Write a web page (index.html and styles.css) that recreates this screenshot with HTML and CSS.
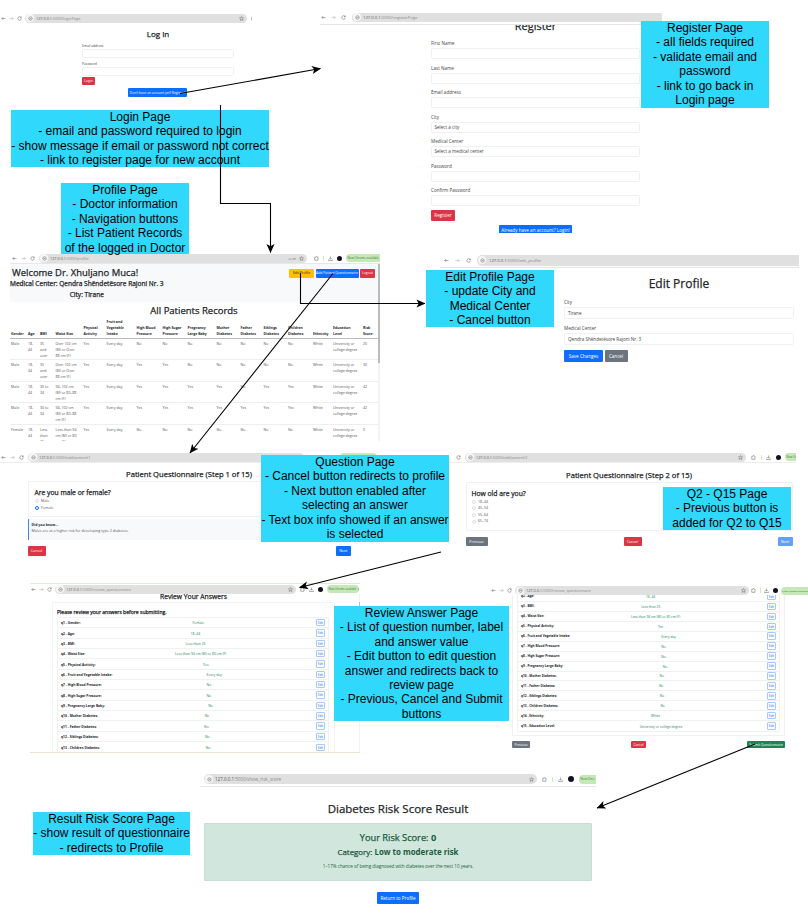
FILE: index.html
```html
<!DOCTYPE html>
<html lang="en">
<head>
<meta charset="utf-8">
<title>Diabetes Risk App – Page Flow</title>
<link rel="stylesheet" href="styles.css">
</head>
<body>
<svg class="defs" aria-hidden="true">
  <symbol id="back" viewBox="0 0 10 10"><path d="M9 5H1.5M4.5 2L1.5 5l3 3" /></symbol>
  <symbol id="fwd" viewBox="0 0 10 10"><path d="M1 5h7.5M5.500 2l3 3-3 3" /></symbol>
  <symbol id="reload" viewBox="0 0 10 10"><path d="M8.500 5.500a3.500 3.500 0 1 1-1-3l1 1M8.500 1v2.500H6" /></symbol>
  <symbol id="info" viewBox="0 0 10 10"><circle cx="5" cy="5" r="3.500"/><path d="M3 5h4" /></symbol>
  <symbol id="star" viewBox="0 0 10 10"><path d="M5 1l1.200 2.700 2.800.3-2.100 2 .6 2.900L5 7.400 2.500 8.900l.6-2.900L1 4l2.800-.3z" /></symbol>
  <symbol id="ext" viewBox="0 0 10 10"><path d="M1.500 2.500h2.500q0-1.500 1.200-1.500t1.200 1.500H8v6H1.500z" /></symbol>
  <symbol id="down" viewBox="0 0 10 10"><path d="M5 1v5M2.500 4L5 6.500 7.500 4M1 7v2h8V7" /></symbol>
</svg>
<main class="canvas">

  <section class="screen login">
    <div class="bar">
      <svg class="ic"><use href="#back"/></svg><svg class="ic dim"><use href="#fwd"/></svg><svg class="ic"><use href="#reload"/></svg>
      <div class="pill"><span class="site"><svg class="ic"><use href="#info"/></svg></span><span class="url"><b>127.0.0.1</b>:5000/loginPage</span><svg class="ic"><use href="#star"/></svg></div>
      <svg class="ic tail"><use href="#ext"/></svg>
    </div>
    <div class="form">
      <h2>Log In</h2>
      <label>Email address</label><div class="input"></div>
      <label>Password</label><div class="input"></div>
      <span class="btn red">Login</span>
      <span class="btn blue wide">Don't have an account yet? Register!</span>
    </div>
  </section>

  <section class="screen register">
    <div class="bar">
      <svg class="ic"><use href="#back"/></svg><svg class="ic dim"><use href="#fwd"/></svg><svg class="ic"><use href="#reload"/></svg>
      <div class="pill"><span class="site"><svg class="ic"><use href="#info"/></svg></span><span class="url"><b>127.0.0.1</b>:5000/registerPage</span></div>
    </div>
    <div class="form">
      <div class="cut"><h2>Register</h2></div>
      <label>First Name</label><div class="input"></div>
      <label>Last Name</label><div class="input"></div>
      <label>Email address</label><div class="input"></div>
      <label>City</label><div class="input">Select a city</div>
      <label>Medical Center</label><div class="input">Select a medical center</div>
      <label>Password</label><div class="input"></div>
      <label>Confirm Password</label><div class="input"></div>
      <span class="btn red">Register</span>
      <span class="btn blue wide">Already have an account? Login!</span>
    </div>
  </section>

  <section class="screen profile">
    <div class="bar">
      <svg class="ic"><use href="#back"/></svg><svg class="ic dim"><use href="#fwd"/></svg><svg class="ic"><use href="#reload"/></svg>
      <div class="pill"><span class="site"><svg class="ic"><use href="#info"/></svg></span><span class="url"><b>127.0.0.1</b>:5000/profile</span><span class="key">o-m</span><svg class="ic"><use href="#star"/></svg></div>
      <div class="tools"><svg class="ic"><use href="#ext"/></svg><i class="sep"></i><svg class="ic"><use href="#down"/></svg><i class="avatar"></i><span class="update">New Chrome available ⋮</span></div>
    </div>
    <div class="view">
      <div class="page">
        <header>
          <div class="who"><h2>Welcome Dr. Xhuljano Muca!</h2><h3 class="mc">Medical Center: Qendra Shëndetësore Rajoni Nr. 3</h3><h3>City: Tirane</h3></div>
          <nav><span class="btn yellow">Edit Profile</span><span class="btn blue">Add Patient Questionnaire</span><span class="btn red">Logout</span></nav>
        </header>
        <h2 class="all">All Patients Records</h2>
        <table>
          <colgroup><col class="c1"><col class="c2"><col class="c3"><col class="c4"><col class="c5"><col class="c6"><col class="c7"><col class="c8"><col class="c9"><col class="c10"><col class="c11"><col class="c12"><col class="c13"><col class="c14"><col class="c15"><col class="c16"></colgroup>
          <thead><tr><th>Gender</th><th>Age</th><th>BMI</th><th>Waist Size</th><th>Physical<br>Activity</th><th>Fruit and<br>Vegetable<br>Intake</th><th>High Blood<br>Pressure</th><th>High Sugar<br>Pressure</th><th>Pregnancy<br>Large Baby</th><th>Mother<br>Diabetes</th><th>Father<br>Diabetes</th><th>Siblings<br>Diabetes</th><th>Children<br>Diabetes</th><th>Ethnicity</th><th>Education<br>Level</th><th>Risk<br>Score</th></tr></thead>
          <tbody>
            <tr><td>Male</td><td>18-<br>44</td><td>35<br>and<br>over</td><td>Over 102 cm<br>(M) or Over<br>88 cm (F)</td><td>Yes</td><td>Every day</td><td>No</td><td>No</td><td>No</td><td>No</td><td>No</td><td>No</td><td>No</td><td>White</td><td>University or<br>college degree</td><td>20</td></tr>
            <tr><td>Male</td><td>18-<br>44</td><td>35<br>and<br>over</td><td>Over 102 cm<br>(M) or Over<br>88 cm (F)</td><td>Yes</td><td>Every day</td><td>Yes</td><td>Yes</td><td>No</td><td>No</td><td>No</td><td>No</td><td>No</td><td>White</td><td>University or<br>college degree</td><td>30</td></tr>
            <tr><td>Male</td><td>18-<br>44</td><td>30 to<br>34</td><td>94–102 cm<br>(M) or 80–88<br>cm (F)</td><td>Yes</td><td>Every day</td><td>Yes</td><td>Yes</td><td>Yes</td><td>Yes</td><td>No</td><td>Yes</td><td>Yes</td><td>White</td><td>University or<br>college degree</td><td>42</td></tr>
            <tr><td>Male</td><td>18-<br>44</td><td>30 to<br>34</td><td>94–102 cm<br>(M) or 80–88<br>cm (F)</td><td>Yes</td><td>Every day</td><td>Yes</td><td>Yes</td><td>Yes</td><td>Yes</td><td>Yes</td><td>Yes</td><td>Yes</td><td>White</td><td>University or<br>college degree</td><td>42</td></tr>
            <tr><td>Female</td><td>18-<br>44</td><td>Less<br>than<br>25</td><td>Less than 94<br>cm (M) or 80<br>cm (F)</td><td>Yes</td><td>Every day</td><td>No</td><td>No</td><td>No</td><td>No</td><td>No</td><td>No</td><td>No</td><td>White</td><td>University or<br>college degree</td><td>0</td></tr>
          </tbody>
        </table>
      </div>
      <div class="track"><i></i></div>
    </div>
  </section>

  <section class="screen edit">
    <div class="bar">
      <svg class="ic"><use href="#back"/></svg><svg class="ic dim"><use href="#fwd"/></svg><svg class="ic"><use href="#reload"/></svg>
      <div class="pill"><span class="site"><svg class="ic"><use href="#info"/></svg></span><span class="url"><b>127.0.0.1</b>:5000/edit_profile</span></div>
    </div>
    <div class="form">
      <h2>Edit Profile</h2>
      <label>City</label><div class="input">Tirane</div>
      <label>Medical Center</label><div class="input">Qendra Shëndetësore Rajoni Nr. 3</div>
      <div class="acts"><span class="btn blue">Save Changes</span><span class="btn gray">Cancel</span></div>
    </div>
  </section>

  <section class="screen q1">
    <div class="bar">
      <svg class="ic"><use href="#back"/></svg><svg class="ic dim"><use href="#fwd"/></svg><svg class="ic"><use href="#reload"/></svg>
      <div class="pill"><span class="site"><svg class="ic"><use href="#info"/></svg></span><span class="url"><b>127.0.0.1</b>:5000/add/patient/1</span></div>
      <div class="tools"><svg class="ic"><use href="#ext"/></svg><svg class="ic"><use href="#down"/></svg><span class="update"></span></div>
    </div>
    <div class="form">
      <h2>Patient Questionnaire (Step 1 of 15)</h2>
      <div class="card"><h3>Are you male or female?</h3><p><i class="radio"></i>Male</p><p><i class="radio on"></i>Female</p></div>
      <div class="tip"><b>Did you know...</b><span>Males are at a higher risk for developing type 2 diabetes.</span></div>
      <div class="acts"><span class="btn red">Cancel</span><span class="btn blue">Next</span></div>
    </div>
  </section>

  <section class="screen q2">
    <div class="bar">
      <svg class="ic"><use href="#reload"/></svg>
      <div class="pill"><span class="site"><svg class="ic"><use href="#info"/></svg></span><span class="url"><b>127.0.0.1</b>:5000/add/patient/2</span><svg class="ic"><use href="#star"/></svg></div>
      <div class="tools"><svg class="ic"><use href="#ext"/></svg><i class="sep"></i><svg class="ic"><use href="#down"/></svg><i class="avatar"></i><span class="update">New Chro</span></div>
    </div>
    <div class="form">
      <h2>Patient Questionnaire (Step 2 of 15)</h2>
      <div class="card"><h3>How old are you?</h3><p><i class="radio"></i>18–44</p><p><i class="radio"></i>45–54</p><p><i class="radio"></i>55–64</p><p><i class="radio"></i>65–74</p></div>
      <div class="acts"><span class="btn gray">Previous</span><span class="btn red">Cancel</span><span class="btn blue off">Next</span></div>
    </div>
  </section>

  <section class="screen review r1">
    <div class="bar">
      <svg class="ic"><use href="#back"/></svg><svg class="ic dim"><use href="#fwd"/></svg><svg class="ic"><use href="#reload"/></svg>
      <div class="pill"><span class="site"><svg class="ic"><use href="#info"/></svg></span><span class="url"><b>127.0.0.1</b>:5000/review_questionnaire</span><svg class="ic"><use href="#star"/></svg></div>
      <div class="tools"><svg class="ic"><use href="#ext"/></svg><svg class="ic"><use href="#down"/></svg><i class="avatar"></i><span class="update">New Chrome available ⋮</span></div>
    </div>
    <div class="view">
      <div class="page">
        <h2>Review Your Answers</h2>
        <div class="box">
          <h3>Please review your answers before submitting.</h3>
          <ul>
            <li><b>q1 - Gender:</b><em>Female</em><span>Edit</span></li>
            <li><b>q2 - Age:</b><em>18–44</em><span>Edit</span></li>
            <li><b>q3 - BMI:</b><em>Less than 25</em><span>Edit</span></li>
            <li><b>q4 - Waist Size:</b><em>Less than 94 cm (M) or 80 cm (F)</em><span>Edit</span></li>
            <li><b>q5 - Physical Activity:</b><em>Yes</em><span>Edit</span></li>
            <li><b>q6 - Fruit and Vegetable Intake:</b><em>Every day</em><span>Edit</span></li>
            <li><b>q7 - High Blood Pressure:</b><em>No</em><span>Edit</span></li>
            <li><b>q8 - High Sugar Pressure:</b><em>No</em><span>Edit</span></li>
            <li><b>q9 - Pregnancy Large Baby:</b><em>No</em><span>Edit</span></li>
            <li><b>q10 - Mother Diabetes:</b><em>No</em><span>Edit</span></li>
            <li><b>q11 - Father Diabetes:</b><em>No</em><span>Edit</span></li>
            <li><b>q12 - Siblings Diabetes:</b><em>No</em><span>Edit</span></li>
            <li><b>q13 - Children Diabetes:</b><em>No</em><span>Edit</span></li>
          </ul>
        </div>
      </div>
      <div class="track"><i></i></div>
    </div>
  </section>

  <section class="screen review r2">
    <div class="bar">
      <svg class="ic"><use href="#back"/></svg><svg class="ic dim"><use href="#fwd"/></svg><svg class="ic"><use href="#reload"/></svg>
      <div class="pill"><span class="site"><svg class="ic"><use href="#info"/></svg></span><span class="url"><b>127.0.0.1</b>:5000/review_questionnaire</span><svg class="ic"><use href="#star"/></svg></div>
      <div class="tools"><svg class="ic"><use href="#ext"/></svg><i class="sep"></i><svg class="ic"><use href="#down"/></svg><i class="avatar"></i><span class="update">New Chrome available ⋮</span></div>
    </div>
    <div class="page">
      <div class="box">
        <ul>
          <li><b>q2 - Age:</b><em>18–44</em><span>Edit</span></li>
          <li><b>q3 - BMI:</b><em>Less than 25</em><span>Edit</span></li>
          <li><b>q4 - Waist Size:</b><em>Less than 94 cm (M) or 80 cm (F)</em><span>Edit</span></li>
          <li><b>q5 - Physical Activity:</b><em>Yes</em><span>Edit</span></li>
          <li><b>q6 - Fruit and Vegetable Intake:</b><em>Every day</em><span>Edit</span></li>
          <li><b>q7 - High Blood Pressure:</b><em>No</em><span>Edit</span></li>
          <li><b>q8 - High Sugar Pressure:</b><em>No</em><span>Edit</span></li>
          <li><b>q9 - Pregnancy Large Baby:</b><em>No</em><span>Edit</span></li>
          <li><b>q10 - Mother Diabetes:</b><em>No</em><span>Edit</span></li>
          <li><b>q11 - Father Diabetes:</b><em>No</em><span>Edit</span></li>
          <li><b>q12 - Siblings Diabetes:</b><em>No</em><span>Edit</span></li>
          <li><b>q13 - Children Diabetes:</b><em>No</em><span>Edit</span></li>
          <li><b>q14 - Ethnicity:</b><em>White</em><span>Edit</span></li>
          <li><b>q15 - Education Level:</b><em>University or college degree</em><span>Edit</span></li>
        </ul>
      </div>
      <div class="acts"><span class="btn gray">Previous</span><span class="btn red">Cancel</span><span class="btn green">Submit Questionnaire</span></div>
    </div>
  </section>

  <section class="screen result">
    <div class="bar">
      <div class="pill"><span class="site"><svg class="ic"><use href="#info"/></svg></span><span class="url"><b>127.0.0.1</b>:5000/show_risk_score</span><svg class="ic"><use href="#star"/></svg></div>
      <div class="tools"><svg class="ic"><use href="#ext"/></svg><i class="sep"></i><svg class="ic"><use href="#down"/></svg><i class="avatar"></i><span class="update">New Chro</span></div>
    </div>
    <div class="form">
      <h2>Diabetes Risk Score Result</h2>
      <div class="score"><h3>Your Risk Score: <b>0</b></h3><h4>Category: <b>Low to moderate risk</b></h4><p>1–17% chance of being diagnosed with diabetes over the next 10 years.</p></div>
      <span class="btn blue">Return to Profile</span>
    </div>
  </section>

  <aside class="note n-login">Login Page<br>- email and password required to login<br>- show message if email or password not correct<br>- link to register page for new account</aside>
  <aside class="note n-register">Register Page<br>- all fields required<br>- validate email and<br>password<br>- link to go back in<br>Login page</aside>
  <aside class="note n-profile">Profile Page<br>- Doctor information<br>- Navigation buttons<br>- List Patient Records<br>of the logged in Doctor</aside>
  <aside class="note n-edit">Edit Profile Page<br>- update City and<br>Medical Center<br>- Cancel button</aside>
  <aside class="note n-q1">Question Page<br>- Cancel button redirects to profile<br>- Next button enabled after<br>selecting an answer<br>- Text box info showed if an answer<br>is selected</aside>
  <aside class="note n-q2">Q2 - Q15 Page<br>- Previous button is<br>added for Q2 to Q15</aside>
  <aside class="note n-review">Review Answer Page<br>- List of question number, label<br>and answer value<br>- Edit button to edit question<br>answer and redirects back to<br>review page<br>- Previous, Cancel and Submit<br>buttons</aside>
  <aside class="note n-result">Result Risk Score Page<br>- show result of questionnaire<br>- redirects to Profile</aside>

  <svg class="wires" viewBox="0 0 808 924" width="808" height="924">
    <defs><marker id="tip" viewBox="0 0 10 10" refX="9.500" refY="5" markerWidth="9" markerHeight="9" markerUnits="userSpaceOnUse" orient="auto"><path d="M0 .5L10 5 0 9.500 2.500 5z"/></marker></defs>
    <path d="M180 93.500L320.500 68.500"/>
    <path d="M220.500 105V203.500H270.500V252.500"/>
    <path d="M300.500 273V303.500H425"/>
    <path d="M333 273.500L190 453"/>
    <path d="M441 552L299.500 587.500"/>
    <path d="M755 744L597 808"/>
  </svg>
</main>
</body>
</html>
```

FILE: styles.css
```css
* { box-sizing: border-box; }
body { margin: 0; background: #fff; color: #212529; font-family: "Open Sans", "Noto Sans", sans-serif; }
h2, h3, h4, p, ul { margin: 0; padding: 0; font-weight: 500; }
.defs { position: absolute; width: 0; height: 0; }
.canvas { position: relative; width: 808px; height: 924px; overflow: hidden; }

/* Canvas items: screenshots, sticky notes and connectors */
.screen { position: absolute; overflow: hidden; background: #fff; }
.note { position: absolute; background: #30d8fb; color: #000; font: 12px/14.4px "Liberation Sans", Arial, sans-serif; text-align: center; white-space: nowrap; display: flow-root; }
.wires { position: absolute; left: 0; top: 0; }
.wires > path { fill: none; stroke: #000; stroke-width: 1.1; marker-end: url(#tip); }

.login { left: 0; top: 13px; width: 252px; height: 90px; }
.register { left: 320px; top: 13px; width: 342px; height: 220px; }
.profile { left: 10px; top: 253px; width: 370px; height: 188px; }
.edit { left: 440px; top: 253px; width: 359px; height: 112px; }
.q1 { left: 0; top: 452px; width: 378px; height: 105px; }
.q2 { left: 440px; top: 452px; width: 356px; height: 105px; }
.r1 { left: 30px; top: 583px; width: 330px; height: 170px; }
.r2 { left: 490px; top: 586px; width: 318px; height: 162px; }
.result { left: 200px; top: 774px; width: 396px; height: 132px; }

.n-login { left: 11px; top: 110px; width: 258px; height: 57px; }
.n-register { left: 641px; top: 21px; width: 128px; height: 87px; }
.n-profile { left: 61px; top: 183px; width: 128px; height: 71px; }
.n-edit { left: 426px; top: 270px; width: 128px; height: 57px; }
.n-q1 { left: 261px; top: 455px; width: 188px; height: 87px; }
.n-q2 { left: 663px; top: 487px; width: 128px; height: 43px; }
.n-review { left: 334px; top: 606px; width: 175px; height: 115px; }
.n-result { left: 33px; top: 812px; width: 157px; height: 43px; }

/* Browser toolbar */
.bar { display: flex; align-items: center; height: 10px; white-space: nowrap; }
.ic { width: 5px; height: 5px; flex: none; fill: none; stroke: #777; stroke-width: 1.2; }
.dim { stroke: #bbb; }
.pill { display: flex; align-items: center; flex: none; height: 9px; padding: 0 3px 0 1px; border-radius: 5px; background: #e0e0e0; }
.site { display: flex; align-items: center; justify-content: center; width: 8px; height: 8px; margin-right: 2px; border-radius: 50%; background: #f7f7f7; }
.url { flex: 1; color: #888; font-size: 3.800px; }
.url b { font-weight: 400; color: #555; }
.key { color: #777; font-size: 4px; margin-right: 3px; }
.tools { display: flex; align-items: center; }
.sep { width: 1px; height: 5px; background: #cdebc0; }
.avatar { width: 5px; height: 5px; border-radius: 50%; background: #112; }
.update { height: 8px; line-height: 8px; padding: 0 1.500px; border-radius: 4px; background: #c5e8b7; color: #4b6c43; font-size: 2.700px; overflow: hidden; }

/* Bootstrap-like controls */
.btn { display: block; width: max-content; border-radius: 1px; color: #fff; text-align: center; white-space: nowrap; flex: none; }
.red { background: #dc3545; }
.blue { background: #0d6efd; }
.gray { background: #6c757d; }
.green { background: #198754; }
.yellow { background: #ffc107; color: #222; }
.off { opacity: .65; }
.input { border: 1px solid #eef0f2; border-radius: 1.500px; background: #fff; white-space: nowrap; color: #444; }
label { display: block; white-space: nowrap; color: #444; }
h2, h3, h4 { white-space: nowrap; -webkit-text-stroke: .25px currentColor; }
h2 { text-align: center; }
.radio { width: 4px; height: 4px; border: .5px solid #dde0e4; border-radius: 50%; }
.radio.on { border: 1.300px solid #0d6efd; }
.card p { display: flex; align-items: center; gap: 2.500px; color: #555; }
.acts { display: flex; justify-content: space-between; }

/* Log in */
.login .bar { padding-left: 1px; gap: 3px; }
.login .pill { width: 222px; }
.login .tail { margin-left: 1px; }
.login .form { width: 152px; margin-left: 82px; font-size: 3.300px; }
.login h2 { height: 18px; line-height: 21px; font-size: 8px; }
.login label { height: 8px; line-height: 9px; }
.login .input { height: 9px; margin-bottom: 1px; }
.login .btn { height: 8px; line-height: 8px; }
.login .red { width: 13px; margin-top: 1px; }
.login .wide { width: 59px; margin: 3px 0 0 46px; height: 9px; line-height: 9px; }

/* Register */
.register .bar { height: 12px; padding: 0 0 3px 1px; gap: 5px; border-bottom: 1px solid #e5e5e5; }
.register .pill { width: 315px; margin-left: 1px; border-radius: 5px 0 0 5px; }
.register .url, .edit .url { font-size: 4.200px; }
.register .form { width: 209px; margin-left: 111px; font-size: 4.600px; }
.register .cut { height: 13px; overflow: hidden; }
.register h2 { margin-top: -7px; line-height: 16px; font-size: 11px; }
.register label { height: 10px; line-height: 10px; }
.register .input { height: 11px; line-height: 9px; margin-bottom: 3.500px; padding-left: 2.500px; }
.register .btn { width: 24px; height: 11px; line-height: 11px; }
.register .wide { width: 73px; margin: 4px 0 0 68px; height: 11px; }

/* Profile */
.profile .bar { padding-left: 2px; gap: 4px; }
.profile .pill { width: 268px; }
.profile .tools { gap: 4px; margin-left: 3px; }
.profile .update { width: 38px; font-size: 3px; }
.view { display: flex; }
.profile .view { height: 178px; border-top: 1px solid #e8e8e8; }
.page { flex: 1; min-width: 0; overflow: hidden; }
.track { width: 2px; background: #f3f3f3; }
.track i { display: block; height: 99px; background: #bbb; }
.profile header { display: flex; justify-content: space-between; height: 38px; padding-right: 3px; background: #f8f9fa; }
.who { display: flex; flex-direction: column; align-items: center; padding-top: 3px; }
.who h2 { font-size: 9.450px; line-height: 12px; align-self: flex-start; margin-left: 2px; }
.who h3 { font-size: 6.550px; line-height: 10.500px; }
.profile nav { display: flex; gap: 1.500px; padding-top: 5px; font-size: 3.400px; }
.profile nav .btn { height: 8.500px; line-height: 8.500px; }
.profile nav .yellow { width: 25px; }
.profile nav .blue { width: 43px; }
.profile nav .red { width: 15px; }
.all { font-size: 9.500px; line-height: 17px; height: 17px; }
table { width: 368px; table-layout: fixed; border-collapse: collapse; font-size: 3.600px; line-height: 5.900px; color: #555; white-space: nowrap; }
th, td { padding: 0 0 0 1px; text-align: left; vertical-align: top; }
th { vertical-align: bottom; padding-bottom: 1px; color: #212529; font-weight: 700; font-size: 3.500px; }
td { height: 21.500px; padding-top: 2px; }
tr { border-bottom: 1px solid #eceef0; }
thead tr { border-bottom-color: #bbb; }
.c1 { width: 17px; } .c2 { width: 12px; } .c3 { width: 15.500px; } .c4 { width: 28px; }
.c5 { width: 23px; } .c6 { width: 30px; } .c7 { width: 26px; } .c8 { width: 25px; }
.c9 { width: 29px; } .c10 { width: 24px; } .c11 { width: 23px; } .c12 { width: 24.500px; }
.c13 { width: 25px; } .c14 { width: 20px; } .c15 { width: 30px; } .c16 { width: 16px; }

/* Edit profile */
.edit .bar { height: 15px; padding-left: 4px; gap: 6px; border-bottom: 1px solid #e5e5e5; }
.edit .pill { width: 325px; height: 11px; margin-left: 0; border-radius: 5px 0 0 5px; }
.edit .site { margin-right: 3px; }
.edit .form { width: 230px; margin-left: 124px; font-size: 4.600px; }
.edit h2 { font-size: 12px; line-height: 31px; height: 30px; }
.edit label { height: 9px; line-height: 8px; }
.edit .input { height: 12px; line-height: 10px; margin-bottom: 5px; padding-left: 3px; }
.edit .acts { justify-content: flex-start; gap: 1.500px; }
.edit .btn { width: 23px; height: 12px; line-height: 12px; }
.edit .blue { width: 39px; }

/* Questionnaire */
.q1 .bar, .q2 .bar { height: 11px; border-bottom: 1px solid #eee; }
.q1 .bar { padding-left: 1px; gap: 4px; }
.q1 .pill { width: 276px; }
.q1 .tools { gap: 5px; margin-left: 4px; }
.q1 .update { width: 37px; margin-left: 8px; }
.q1 .form { width: 323px; margin-left: 27.500px; font-size: 3.700px; }
.q1 h2, .q2 h2 { font-size: 7.600px; height: 18px; line-height: 22px; }
.card { border: 1px solid #f0f1f3; border-radius: 2px; padding: 5px 6px; }
.q1 .card { height: 36px; }
.card h3 { font-size: 6.750px; line-height: 11px; }
.card p { height: 6.600px; line-height: 6.600px; }
.tip { display: flex; flex-direction: column; height: 21px; margin-top: 2px; padding: 3px 3px; border-left: 1.500px solid #2f8bf5; background: #f8f9fa; line-height: 6px; }
.tip b { font-size: 3.500px; }
.tip span { color: #555; }
.q1 .acts { margin-top: 6px; }
.q1 .btn, .q2 .btn { width: 18px; height: 9.500px; line-height: 9.500px; }
.q1 .blue { width: 14.500px; }
.q2 .bar { padding-left: 16px; gap: 4px; }
.q2 .pill { width: 281px; }
.q2 .tools { gap: 4.500px; margin-left: 1px; }
.q2 .form { width: 327px; margin-left: 25.500px; font-size: 3.600px; }
.q2 h2 { height: 18.500px; line-height: 24px; }
.q2 .card { height: 49px; padding-left: 5px; }
.q2 .acts { margin-top: 6px; }
.q2 .gray { width: 22px; }
.q2 .blue { width: 15px; }

/* Review */
.r1 { border-top: 1px solid #d8f0cf; border-bottom: 1px solid #ebe3cf; }
.r1 .bar { padding-left: 1px; gap: 3px; }
.r1 .pill { width: 241px; }
.r1 .tools { gap: 4px; margin-left: 1px; }
.r1 .update { width: 32px; }
.r1 .view { height: 159px; }
.r1 .page { padding: 0 24px 0 22px; }
.r1 .track { width: 1px; }
.r1 .track i { height: 12px; margin-top: 8px; }
.r1 h2 { font-size: 6.750px; line-height: 6px; height: 8px; }
.r1 .box { border: 1px solid #f3f4f5; border-bottom: 0; padding: 4px 5px 0 4px; height: 160px; }
.r1 h3 { font-size: 5.050px; line-height: 10px; height: 10px; }
ul { list-style: none; border: 1px solid #f0f1f3; border-radius: 1.500px; font-size: 3.450px; }
li { display: flex; align-items: center; justify-content: space-between; height: 10.350px; padding: 0 3px; border-bottom: 1px solid #f0f1f3; }
.r2 ul { font-size: 3.300px; }
.r2 li { height: 9.950px; }
li:last-child { border-bottom: 0; }
li b { font-weight: 700; font-size: .96em; }
li em { font-style: normal; color: #198754; }
li span { width: 9px; height: 7.500px; line-height: 6px; border: .5px solid #a6c8fe; border-radius: 1px; color: #0d6efd; text-align: center; font-size: 3px; }
.r2 .bar { height: 9px; padding-left: 1px; gap: 3px; }
.r2 .pill { width: 234px; }
.r2 .tools { gap: 3.500px; margin-left: -1px; }
.r2 .update { width: 31px; font-size: 2.500px; }
.r2 .page { width: 273px; margin-left: 22px; }
.r2 .box { height: 141px; overflow: hidden; border: 1px solid #f0f1f3; border-top: 0; padding: 0 4px; }
.r2 ul { margin-top: -4px; }
.r2 .acts { margin-top: 5px; font-size: 3.300px; }
.r2 .btn { width: 18px; height: 7px; line-height: 7px; }
.r2 .red { width: 15px; }
.r2 .green { width: 38px; }

/* Result */
.result .bar { height: 13px; padding: 0 0 2px 4px; border-bottom: 1px solid #e8e8e8; }
.result .pill { width: 333px; height: 10px; }
.result .url { font-size: 4.500px; }
.result .tools { gap: 5px; margin-left: 5px; }
.result .avatar { width: 6px; height: 6px; }
.result .update { height: 9px; line-height: 9px; width: 17px; font-size: 3px; border-radius: 4px 0 0 4px; }
.result .form { width: 388px; margin-left: 4px; }
.result h2 { font-size: 11.500px; line-height: 43px; height: 36px; }
.score { height: 58px; padding-top: 6px; border: 1px solid #c5e0d3; border-radius: 1px; background: #d1e7dd; text-align: center; color: #1c5c3d; }
.score h3 { font-size: 9.250px; line-height: 15px; }
.score h4 { font-size: 7.900px; line-height: 15px; }
.score p { font-size: 4.550px; line-height: 12px; font-weight: 400; }
.score b { font-weight: 700; -webkit-text-stroke: 0; }
.result .btn { width: 42px; height: 12px; line-height: 12px; margin: 11px auto 0; font-size: 4.600px; }
```
